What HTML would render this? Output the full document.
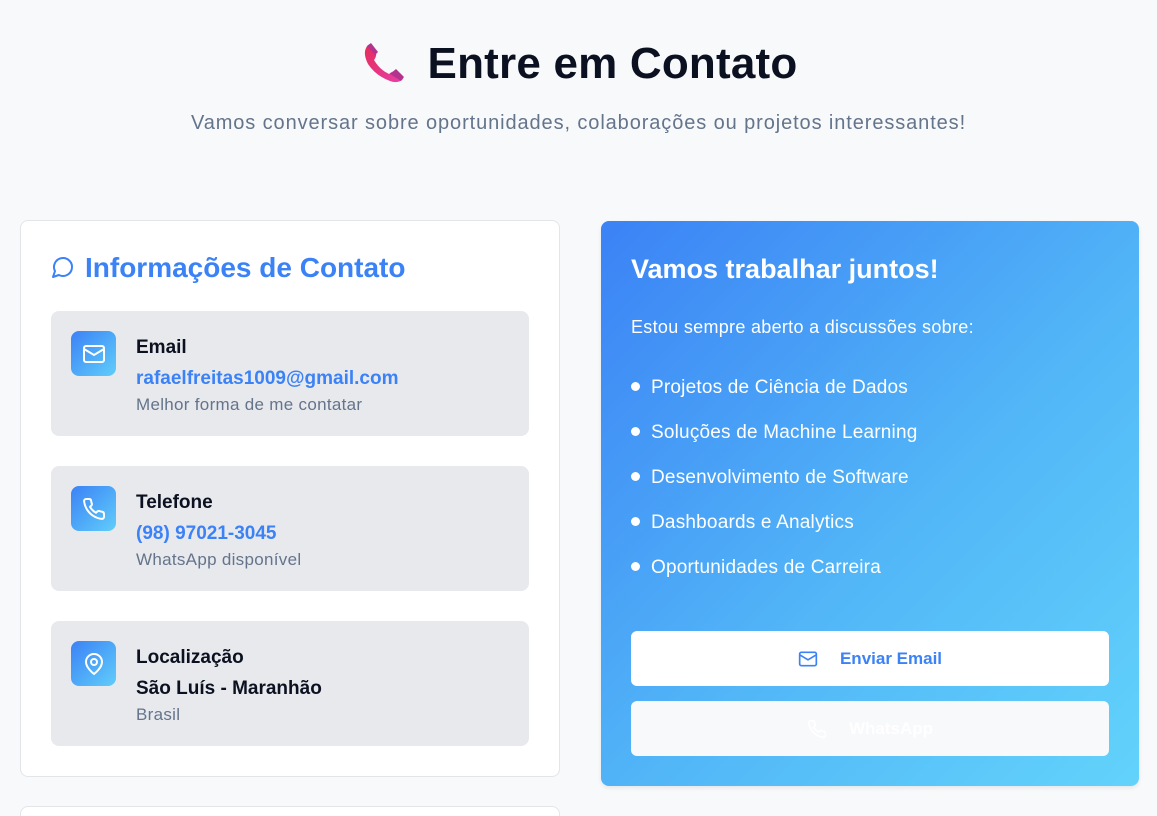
<!DOCTYPE html>
<html><head><meta charset="utf-8"><style>
*{box-sizing:border-box;margin:0;padding:0}
html,body{width:1157px;height:816px;overflow:hidden}
body{background:#f8f9fb;font-family:"Liberation Sans",sans-serif;position:relative}
h1{position:absolute;top:38px;left:0;width:1157px;text-align:center;font-size:44px;font-weight:700;color:#0b1120;letter-spacing:0.2px}
h1 svg{vertical-align:-6px;margin-right:22px}
.sub{position:absolute;top:112px;width:1157px;text-align:center;font-size:20px;color:#64748b;letter-spacing:0.9px}
.card{position:absolute;left:20px;top:220px;width:540px;height:557px;background:#fff;border:1px solid #e2e5ea;border-radius:8px}
.card2{position:absolute;left:20px;top:806px;width:540px;height:40px;background:#fff;border:1px solid #e2e5ea;border-radius:8px}
.ct{position:absolute;left:30px;top:31px;font-size:28px;font-weight:700;color:#3b82f6}
.ct svg{vertical-align:-2px;margin-right:10px}
.item{position:absolute;left:30px;width:478px;height:125px;background:#e8e9ed;border-radius:8px}
.ic{position:absolute;left:20px;top:20px;width:45px;height:45px;border-radius:8px;background:linear-gradient(135deg,#3b82f6,#60cdfa);display:flex;align-items:center;justify-content:center}
.t{position:absolute;left:85px;top:26px;font-size:19px;font-weight:700;color:#0b1120}
.v{position:absolute;left:85px;top:57px;font-size:19px;font-weight:700;color:#3b82f6}
.d{position:absolute;left:85px;top:84px;font-size:17px;color:#64748b;letter-spacing:0.3px}
.right{position:absolute;left:601px;top:221px;width:538px;height:565px;border-radius:8px;background:linear-gradient(135deg,#3b82f6 0%,#52b6f7 55%,#62d3fb 100%);color:#fff;box-shadow:0 2px 4px rgba(0,0,0,.08)}
.rt{position:absolute;left:30px;top:33px;font-size:27px;font-weight:700}
.rp{position:absolute;left:30px;top:96px;font-size:18px;letter-spacing:0.3px}
ul{position:absolute;left:30px;top:156px;list-style:none}
li{font-size:19px;height:45px;position:relative;padding-left:20px;letter-spacing:0.2px}
li:before{content:"";position:absolute;left:0;top:5px;width:9px;height:9px;border-radius:50%;background:#fff}
.btn{position:absolute;left:30px;width:478px;height:55px;border-radius:6px;display:flex;align-items:center;justify-content:center;font-size:17px;font-weight:700}
.btn svg{margin-right:22px}
</style></head><body>
<h1><svg width="46" height="46" viewBox="0 0 46 46"><defs><linearGradient id="g" x1="0" y1="0" x2="1" y2="1"><stop offset="0" stop-color="#e52c5a"/><stop offset="1" stop-color="#e73fa8"/></linearGradient></defs><path d="M6 10 Q3 16 8 26 Q16 38 30 43 Q38 46 43 41 L38 34 Q33 32 29 36 Q20 32 14 22 Q17 18 16 14 L11 6 Q8 6 6 10Z" fill="url(#g)"/><path d="M7 8 L11 5 L18 14 L15 17Z" fill="#b3348f"/><path d="M30 36 L36 31 L44 39 L41 43Z" fill="#b3348f"/></svg>Entre em Contato</h1>
<div class="sub">Vamos conversar sobre oportunidades, colaborações ou projetos interessantes!</div>
<div class="card">
<div class="ct"><svg width="24" height="24" viewBox="0 0 24 24" fill="none" stroke="#3b82f6" stroke-width="2" stroke-linecap="round" stroke-linejoin="round"><path d="M7.9 20A9 9 0 1 0 4 16.1L2 22Z"/></svg>Informações de Contato</div>
<div class="item" style="top:90px"><div class="ic"><svg width="24" height="24" viewBox="0 0 24 24" fill="none" stroke="#fff" stroke-width="2"><rect x="2" y="4" width="20" height="16" rx="2"/><path d="M22 7l-10 6L2 7"/></svg></div><div class="t">Email</div><div class="v">rafaelfreitas1009@gmail.com</div><div class="d">Melhor forma de me contatar</div></div>
<div class="item" style="top:245px"><div class="ic"><svg width="24" height="24" viewBox="0 0 24 24" fill="none" stroke="#fff" stroke-width="2" stroke-linejoin="round"><path d="M22 16.9v3a2 2 0 0 1-2.2 2 19.8 19.8 0 0 1-8.6-3.1 19.5 19.5 0 0 1-6-6A19.8 19.8 0 0 1 2.1 4.2 2 2 0 0 1 4.1 2h3a2 2 0 0 1 2 1.7c.1 1 .4 1.9.7 2.8a2 2 0 0 1-.5 2.1L8 9.8a16 16 0 0 0 6 6l1.3-1.3a2 2 0 0 1 2.1-.4c.9.3 1.8.6 2.8.7a2 2 0 0 1 1.7 2z"/></svg></div><div class="t">Telefone</div><div class="v">(98) 97021-3045</div><div class="d">WhatsApp disponível</div></div>
<div class="item" style="top:400px"><div class="ic"><svg width="24" height="24" viewBox="0 0 24 24" fill="none" stroke="#fff" stroke-width="2"><path d="M20 10c0 6-8 12-8 12s-8-6-8-12a8 8 0 0 1 16 0z"/><circle cx="12" cy="10" r="3"/></svg></div><div class="t">Localização</div><div class="v" style="color:#0b1120">São Luís - Maranhão</div><div class="d">Brasil</div></div>
</div>
<div class="card2"></div>
<div class="right">
<div class="rt">Vamos trabalhar juntos!</div>
<div class="rp">Estou sempre aberto a discussões sobre:</div>
<ul><li>Projetos de Ciência de Dados</li><li>Soluções de Machine Learning</li><li>Desenvolvimento de Software</li><li>Dashboards e Analytics</li><li>Oportunidades de Carreira</li></ul>
<div class="btn" style="top:410px;background:#fff;color:#3b82f6"><svg width="20" height="20" viewBox="0 0 24 24" fill="none" stroke="#3b82f6" stroke-width="2"><rect x="2" y="4" width="20" height="16" rx="2"/><path d="M22 7l-10 6L2 7"/></svg>Enviar Email</div>
<div class="btn" style="top:480px;background:#f8f9fb;color:#fff"><svg width="20" height="20" viewBox="0 0 24 24" fill="none" stroke="#fff" stroke-width="2"><path d="M22 16.9v3a2 2 0 0 1-2.2 2 19.8 19.8 0 0 1-8.6-3.1 19.5 19.5 0 0 1-6-6A19.8 19.8 0 0 1 2.1 4.2 2 2 0 0 1 4.1 2h3a2 2 0 0 1 2 1.7c.1 1 .4 1.9.7 2.8a2 2 0 0 1-.5 2.1L8 9.8a16 16 0 0 0 6 6l1.3-1.3a2 2 0 0 1 2.1-.4c.9.3 1.8.6 2.8.7a2 2 0 0 1 1.7 2z"/></svg>WhatsApp</div>
</div>
</body></html>
